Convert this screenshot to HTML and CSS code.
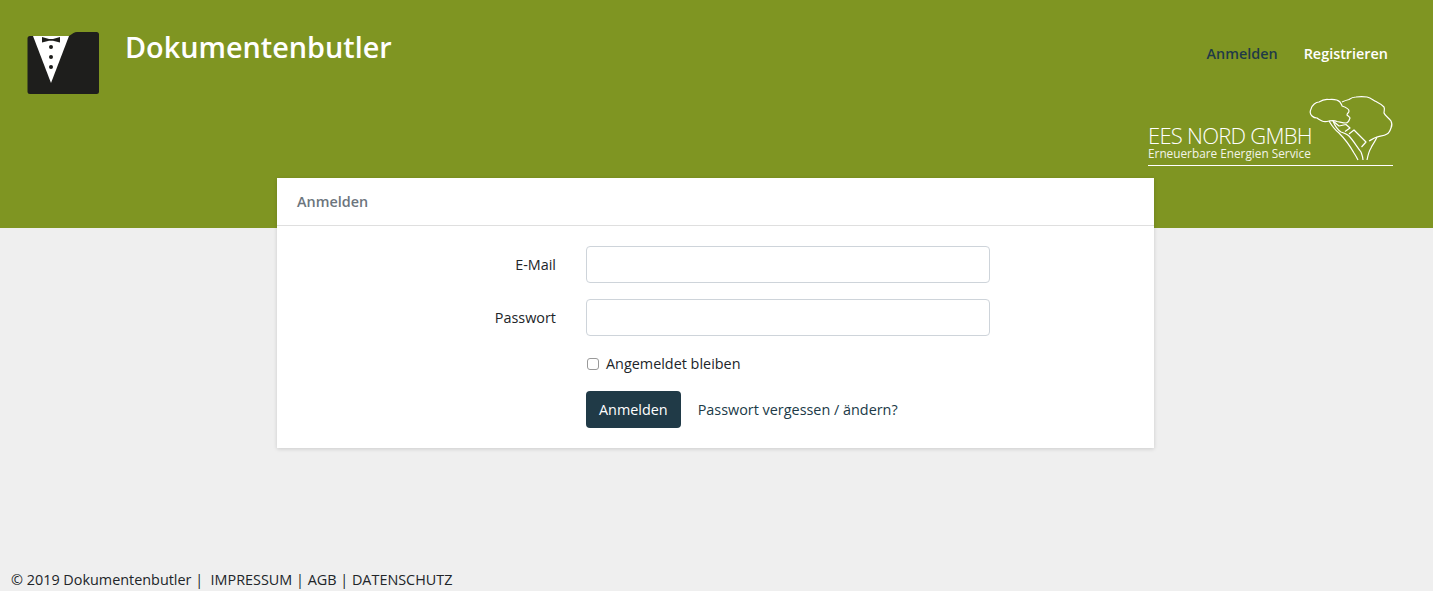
FILE: index.html
```html
<!DOCTYPE html>
<html lang="de">
<head>
  <meta charset="UTF-8">
  <title>Dokumentenbutler</title>
  <link rel="stylesheet" href="styles.css">
</head>
<body>
  <div class="hero">
    <div class="navbar">
      <a class="brand" href="#">
        <svg class="brand-logo" width="74" height="66" viewBox="0 0 74 66">
          <path d="M3 5H42L46.500 2Q48 1 50 1H69.500Q72 1 72 3.500V60.500Q72 63 69.500 63H3Q0.500 63 0.500 60.500V7.500Q0.500 5 3 5Z" fill="#1e1e1c"/>
          <path d="M6 5H42L24 52Z" fill="#fff"/>
          <path d="M15 6L22 8H26L33 6V11.500L26 9.800H22L15 11.500Z" fill="#1e1e1c"/>
          <circle cx="24" cy="16" r="2" fill="#1e1e1c"/>
          <circle cx="24" cy="26" r="2" fill="#1e1e1c"/>
          <circle cx="24" cy="36" r="2" fill="#1e1e1c"/>
        </svg>
        <span class="brand-name">Dokumentenbutler</span>
      </a>
      <div class="nav-side">
        <div class="nav-links">
          <a class="nav-link active" href="#">Anmelden</a>
          <a class="nav-link" href="#">Registrieren</a>
        </div>
        <div class="ees">
          <div class="ees-text">
            <div class="ees-name">EES NORD GMBH</div>
            <div class="ees-sub">Erneuerbare Energien Service</div>
          </div>
          <svg class="ees-tree" width="84" height="64" viewBox="0 0 84 64" fill="none" stroke="#fff" stroke-width="1.200" stroke-linejoin="round">
            <path d="M2 12C3 8 7 5 10 5C13 3 17 2 20 2.500C25 2 29 3 31 5C32 7 33 8 33 9C36 10 40 12 40 14C40 16 38 16 38 18C39 19 41 20 41 21C40 24 39 26 37 26C34 26 31 25 28 24.500C25 23 23 23.500 20 24C17 25 15 25 13 24C11 23 9 22 8 21C6 21 4 20 3 19C1 17 1 14 2 12Z"/>
            <path d="M33 5C35 4 38 3 40 2.500C42 1 45 0 47 0C50 -0.500 55 -0.500 58 0C62 1 64 3 67 4.500C70 6 73 8 75 10C76 12 75 14 75 16C76 19 80 21 82 24C83 26 83 29 82 31C81 34 80 36 78 37C75 39 71 39 68 40C65 41 62 43 60 44"/>
            <path d="M20 24C23 29 26 33 30 36C35 41 41 49 45 56C47 59 48 61 49 63"/>
            <path d="M24 24C26 29 29 33 32 35C35 36 38 37 40 39C44 43 48 50 52 55C53 58 54 60 54 63"/>
            <path d="M24 24L30 29L37 27.500L41 31L36 34.500M40 37L45 33L57 45L52.500 50"/>
            <path d="M58 63C59 58 60 54 62 51C63 48 66 45 68 40"/>
          </svg>
        </div>
        <div class="ees-line"></div>
      </div>
    </div>
  </div>

  <div class="content">
    <div class="card">
      <div class="card-header">Anmelden</div>
      <form class="card-body">
        <div class="form-row">
          <label class="form-label" for="email">E-Mail</label>
          <input class="form-input" id="email" type="email">
        </div>
        <div class="form-row">
          <label class="form-label" for="password">Passwort</label>
          <input class="form-input" id="password" type="password">
        </div>
        <div class="form-row remember">
          <label class="check-label"><span class="check-box"></span>Angemeldet bleiben</label>
        </div>
        <div class="form-row actions">
          <button class="btn" type="button">Anmelden</button>
          <a class="forgot" href="#">Passwort vergessen / ändern?</a>
        </div>
      </form>
    </div>
  </div>

  <div class="footer">© 2019 Dokumentenbutler |&nbsp; IMPRESSUM | AGB | DATENSCHUTZ</div>
</body>
</html>
```

FILE: styles.css
```css
* {
  box-sizing: border-box;
}

html, body {
  height: 100%;
}

body {
  margin: 0;
  display: flex;
  flex-direction: column;
  background: #efefef;
  color: #212529;
  font-family: 'Open Sans', sans-serif;
  font-size: 14.4px;
  line-height: 1.5;
  overflow: hidden;
}

a {
  text-decoration: none;
}

.hero {
  height: 228px;
  flex: none;
  background: #7f9522;
}

.navbar {
  display: flex;
  justify-content: space-between;
  padding: 30px 40px 0 27px;
}

.brand {
  display: flex;
  align-items: flex-start;
  gap: 24px;
}

.brand-logo {
  margin-top: 1px;
}

.brand-name {
  color: #fff;
  font-size: 28.8px;
  font-weight: 600;
  line-height: 34px;
}

.nav-side {
  display: flex;
  flex-direction: column;
  align-items: flex-end;
}

.nav-links {
  display: flex;
  gap: 26px;
  padding: 13px 5px 0 0;
}

.nav-link {
  color: #fff;
  font-weight: 600;
}

.nav-link.active {
  color: #1f3a47;
}

.ees {
  display: flex;
  align-items: flex-end;
  margin-top: 32px;
  height: 64px;
}

.ees-text {
  color: #fff;
  width: 161px;
  padding-bottom: 1px;
}

.ees-tree {
  overflow: visible;
}

.ees-name {
  font-size: 22px;
  line-height: 22px;
  letter-spacing: -0.75px;
  font-weight: 300;
  white-space: nowrap;
  margin-bottom: 1px;
}

.ees-sub {
  font-size: 11.8px;
  line-height: 13px;
  white-space: nowrap;
  opacity: 0.9;
}

.ees-line {
  width: 245px;
  height: 1px;
  background: #fff;
  margin-top: 4px;
}

.content {
  flex: 1;
  margin-top: -50px;
}

.card {
  width: 877px;
  margin-left: 277px;
  background: #fff;
  box-shadow: 0 1px 4px rgba(0, 0, 0, 0.15);
}

.card-header {
  height: 48px;
  padding: 13px 20px;
  color: #6c757d;
  font-weight: 600;
  border-bottom: 1px solid #dfdfdf;
}

.card-body {
  padding: 20px 0;
}

.form-row {
  display: flex;
  align-items: center;
  margin-bottom: 16px;
  padding-left: 309px;
}

.form-label {
  width: 279px;
  margin-left: -309px;
  text-align: right;
  margin-right: 30px;
}

.form-input {
  width: 404px;
  height: 37px;
  border: 1px solid #ced4da;
  border-radius: 4px;
  background: #fff;
}

.remember {
  height: 23px;
}

.check-label {
  display: flex;
  align-items: center;
  gap: 7px;
  padding-left: 1px;
}

.check-box {
  width: 12px;
  height: 12px;
  margin-top: 1px;
  border: 1px solid #999;
  border-radius: 3px;
  background: #fff;
}

.actions {
  margin-bottom: 0;
  gap: 17px;
}

.btn {
  height: 37px;
  padding: 0 13px;
  border: 0;
  border-radius: 4px;
  background: #203a47;
  color: #fff;
  font: 500 14.4px 'Open Sans', sans-serif;
}

.forgot {
  color: #203a47;
}

.footer {
  flex: none;
  padding: 0 11px;
  height: 22px;
  color: #212529;
}
```
